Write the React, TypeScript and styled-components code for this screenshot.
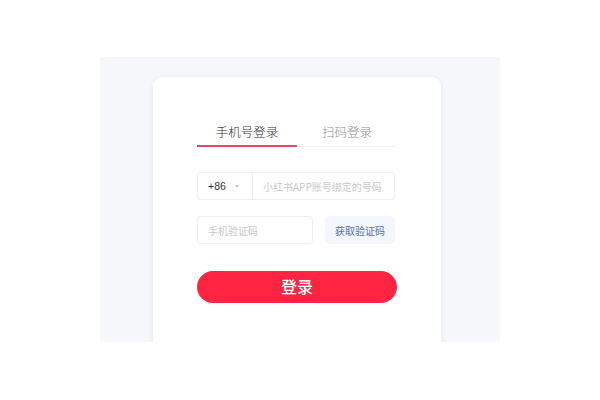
import React from "react";
import styled, { createGlobalStyle } from "styled-components";

const Global = createGlobalStyle`
  html, body { margin: 0; padding: 0; background: #ffffff; }
  body { font-family: "Noto Sans CJK SC", "Noto Sans", "Liberation Sans", sans-serif; }
  * { box-sizing: border-box; }
`;

const Page = styled.div`
  width: 600px;
  height: 400px;
  padding-top: 57px;
  display: flex;
  justify-content: center;
  align-items: flex-start;
`;

const Panel = styled.div`
  width: 400px;
  height: 285px;
  background: #f5f7fa;
  overflow: hidden;
  padding: 20px 0 0 53px;
`;

const Card = styled.div`
  width: 288px;
  height: 320px;
  background: #ffffff;
  border-radius: 9px;
  box-shadow: 0 1px 6px rgba(40, 60, 90, 0.07);
  padding: 45px 44px 0;
  display: flex;
  flex-direction: column;
`;

const Tabs = styled.div`
  display: flex;
  border-bottom: 1px solid #f2f2f2;
`;

const Tab = styled.div<{ $active?: boolean }>`
  flex: 1;
  text-align: center;
  font-size: 12.5px;
  font-weight: 300;
  line-height: 20px;
  padding-bottom: 3px;
  color: ${(p) => (p.$active ? "#333333" : "#8f8f8f")};
  border-bottom: 2px solid ${(p) => (p.$active ? "#e04a66" : "transparent")};
  margin-bottom: -1px;
`;

const PhoneField = styled.div`
  margin-top: 25px;
  width: 198px;
  height: 28px;
  border: 1px solid #f0f0f0;
  border-radius: 4px;
  display: flex;
  align-items: center;
`;

const CountryCode = styled.div`
  width: 55px;
  height: 100%;
  display: flex;
  align-items: center;
  padding-left: 10px;
  gap: 9px;
  border-right: 1px solid #f0f0f0;
  font-size: 10.5px;
  color: #333333;
  font-family: "Liberation Sans", "Noto Sans CJK SC", sans-serif;
`;

const Caret = styled.span`
  width: 0;
  height: 0;
  border-left: 2.5px solid transparent;
  border-right: 2.5px solid transparent;
  border-top: 3px solid #c4c4c4;
  margin-top: 1px;
`;

const Input = styled.input`
  flex: 1;
  min-width: 0;
  height: 100%;
  border: none;
  outline: none;
  background: transparent;
  padding: 0 10px;
  font-size: 10px;
  font-family: "Noto Sans CJK SC", "Liberation Sans", sans-serif;
  color: #333;
  &::placeholder { color: #c9c9c9; }
`;

const CodeRow = styled.div`
  margin-top: 16px;
  width: 198px;
  height: 28px;
  display: flex;
  gap: 12px;
`;

const CodeField = styled.div`
  width: 116px;
  height: 100%;
  border: 1px solid #f0f0f0;
  border-radius: 4px;
  display: flex;
`;

const CodeButton = styled.button`
  flex: 1;
  height: 100%;
  border: none;
  border-radius: 4px;
  background: #f3f6fd;
  color: #5a72b6;
  font-size: 10px;
  font-family: "Noto Sans CJK SC", sans-serif;
  padding: 0;
`;

const LoginButton = styled.button`
  margin-top: 27px;
  height: 32px;
  width: 100%;
  border: none;
  border-radius: 16px;
  background: #ff2442;
  color: #ffffff;
  font-size: 16px;
  font-weight: 500;
  line-height: 30px;
  font-family: "Noto Sans CJK SC", sans-serif;
  padding: 0 0 2px;
`;

export default function App() {
  return (
    <>
      <Global />
      <Page>
        <Panel>
          <Card>
            <Tabs>
              <Tab $active>手机号登录</Tab>
              <Tab>扫码登录</Tab>
            </Tabs>
            <PhoneField>
              <CountryCode>
                +86 <Caret />
              </CountryCode>
              <Input placeholder="小红书APP账号绑定的号码" />
            </PhoneField>
            <CodeRow>
              <CodeField>
                <Input placeholder="手机验证码" />
              </CodeField>
              <CodeButton>获取验证码</CodeButton>
            </CodeRow>
            <LoginButton>登录</LoginButton>
          </Card>
        </Panel>
      </Page>
    </>
  );
}
